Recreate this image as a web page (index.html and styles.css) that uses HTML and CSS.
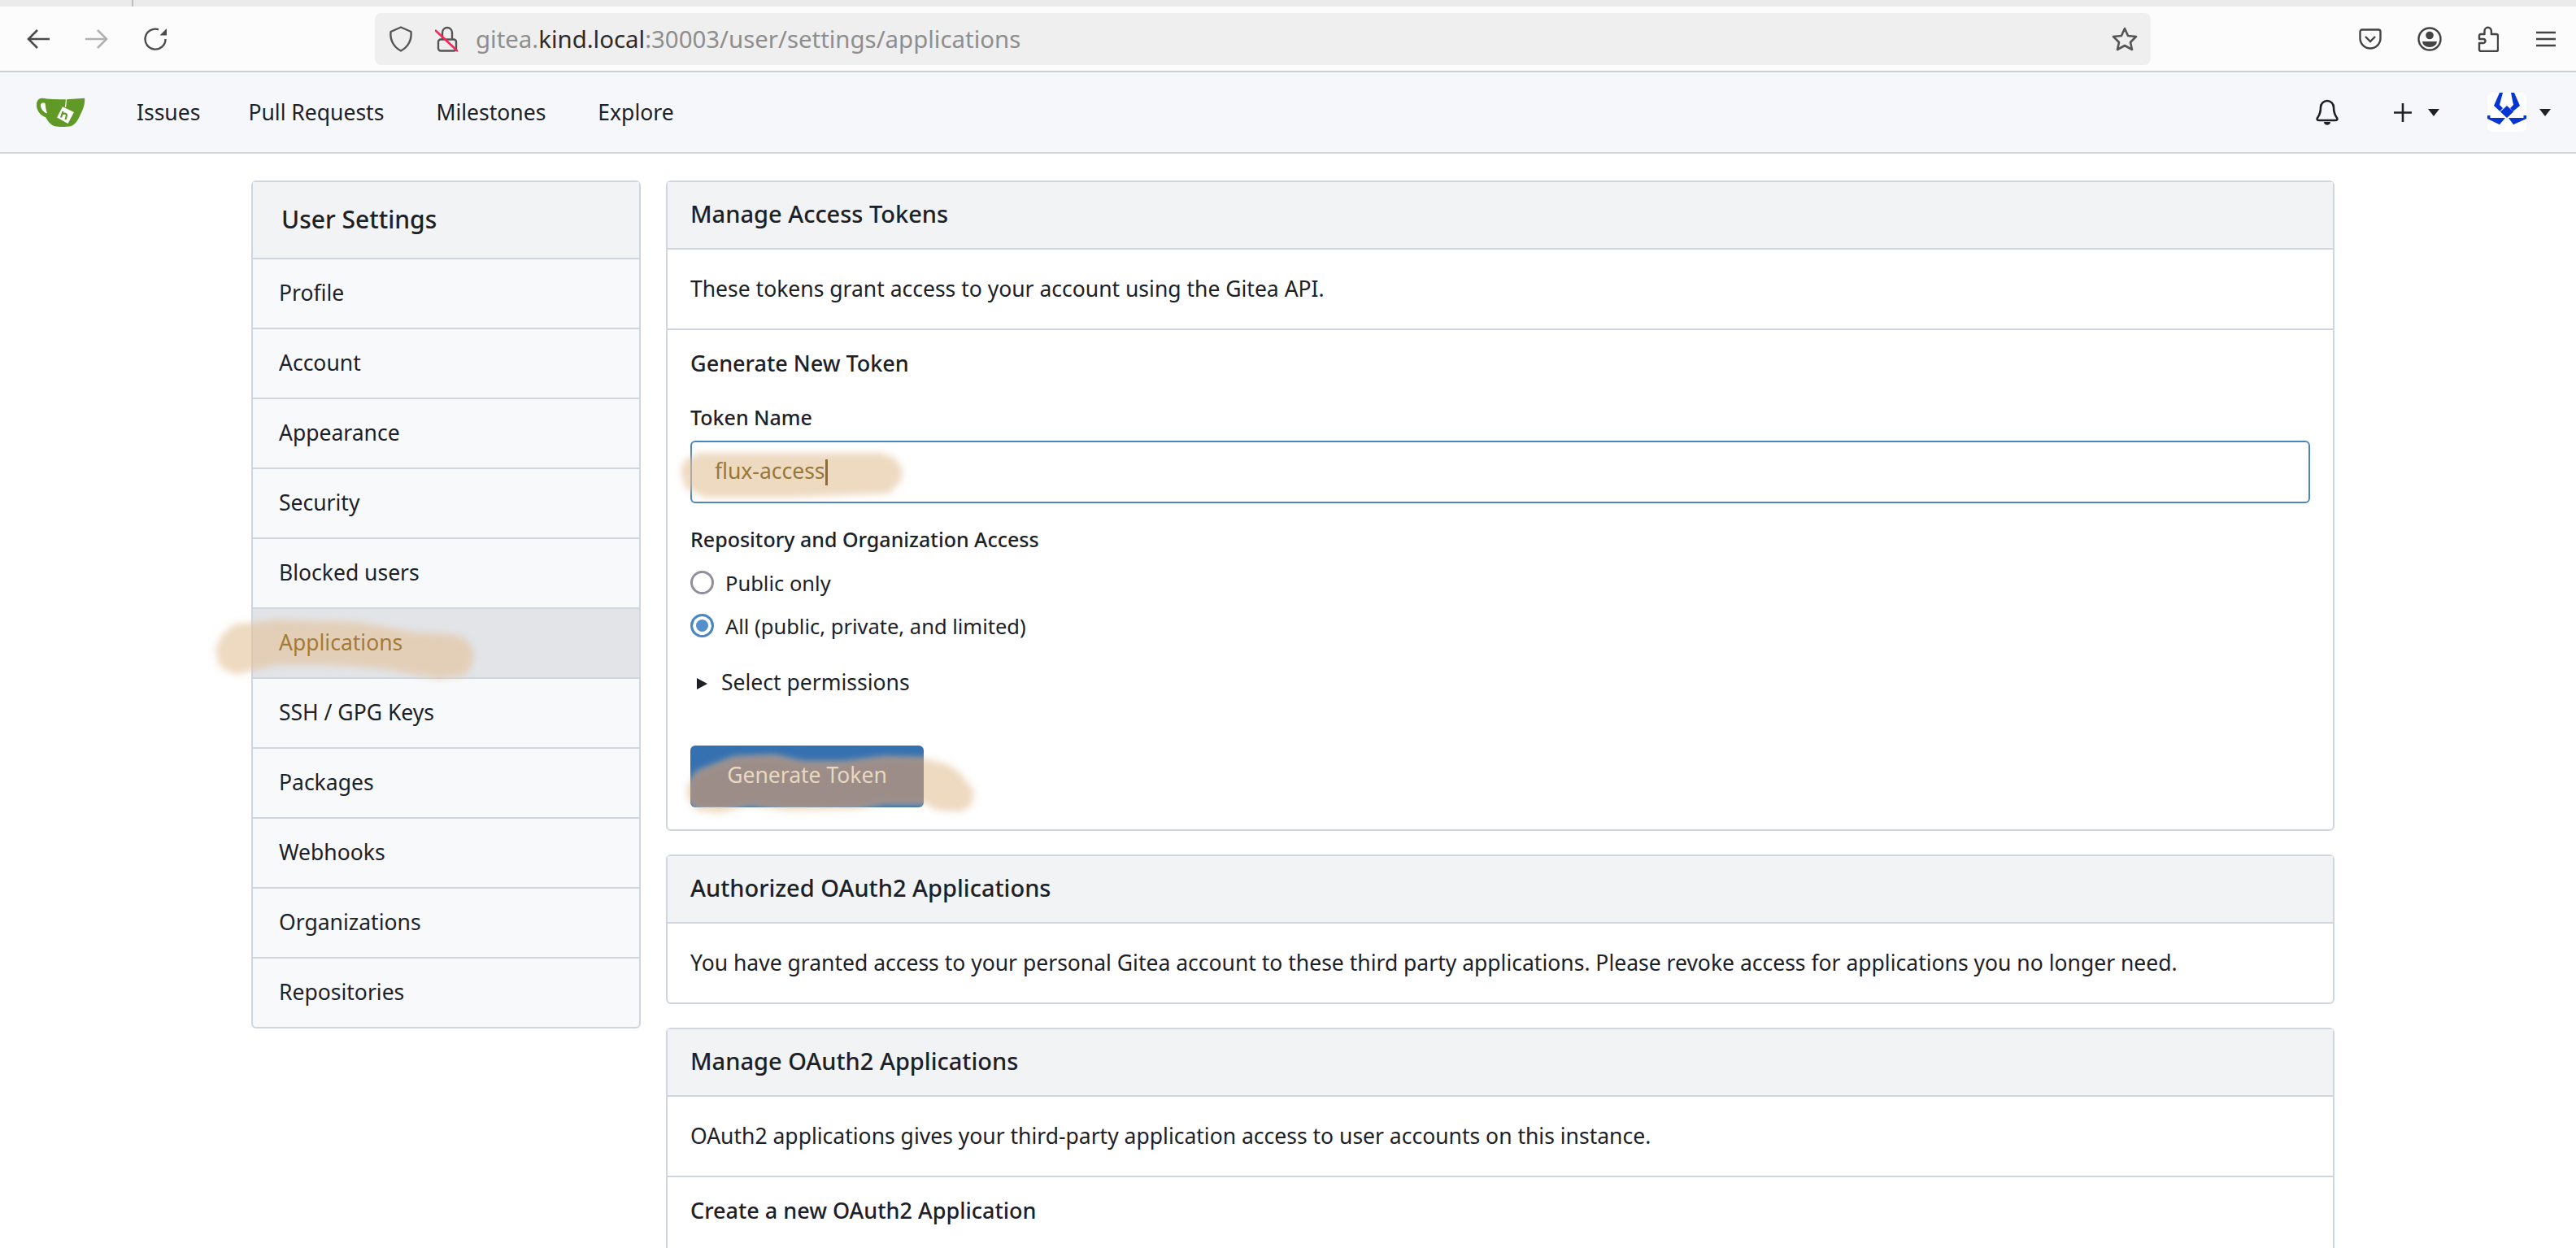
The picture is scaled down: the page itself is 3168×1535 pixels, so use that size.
FILE: index.html
```html
<!DOCTYPE html>
<html lang="en">
<head>
    <meta charset="UTF-8">
    <meta name="viewport" content="width=device-width, initial-scale=1.0">
    <title>Applications - Gitea</title>
    <link rel="stylesheet" href="styles.css">
</head>
<body>
    <div class="tabstrip"><span class="tabstrip-tick"></span></div>

    <!-- browser toolbar -->
    <div class="toolbar">
        <svg class="icon icon-back" viewBox="0 0 28 24"><path d="M13 1 2 12l11 11M2 12h26" fill="none" stroke="#4a4a4a" stroke-width="2.6"/></svg>
        <svg class="icon icon-forward" viewBox="0 0 28 24"><path d="M15 1l11 11-11 11M26 12H0" fill="none" stroke="#b0b0b0" stroke-width="2.6"/></svg>
        <svg class="icon icon-reload" viewBox="0 0 28 28"><path d="M18 2.3A12.5 12.5 0 1 0 26.5 14" fill="none" stroke="#4a4a4a" stroke-width="2.4"/><path d="M28 1v8.5H19.5z" fill="#4a4a4a"/></svg>
        <div class="urlbar">
            <svg class="icon icon-shield" viewBox="0 0 30 32"><path d="M15 1.5 27.5 7c1 10-3.5 19-12.5 23.5C6 26 1.5 17 2.5 7z" fill="none" stroke="#555" stroke-width="2.4" stroke-linejoin="round"/></svg>
            <svg class="icon icon-lock" viewBox="0 0 28 32"><path d="M9 16V8a6 6 0 0 1 12 0v8" fill="none" stroke="#555" stroke-width="2.4"/><rect x="4" y="16.5" width="22" height="14" rx="3" fill="none" stroke="#555" stroke-width="2.4"/><path d="M0 5l28 26" stroke="#ff2257" stroke-width="2.6"/></svg>
            <div class="url"><span class="url-dim">gitea.</span>kind.local<span class="url-dim">:30003/user/settings/applications</span></div>
            <svg class="icon icon-star" viewBox="0 0 32 30"><path d="M16 2l4 9 10 1-7 7 2 9-9-5-9 5 2-9-7-7 10-1z" fill="none" stroke="#555" stroke-width="2.6" stroke-linejoin="round"/></svg>
        </div>
        <div class="toolbar-right">
            <svg class="icon icon-pocket" viewBox="0 0 28 26"><path d="M4 1.5h20A2.5 2.5 0 0 1 26.5 4v8a12.5 12.5 0 0 1-25 0V4A2.5 2.5 0 0 1 4 1.5z" fill="none" stroke="#444" stroke-width="2.4"/><path d="M8 10l6 6 6-6" fill="none" stroke="#444" stroke-width="2.4"/></svg>
            <svg class="icon icon-account" viewBox="0 0 30 30"><circle cx="15" cy="15" r="13.5" fill="none" stroke="#444" stroke-width="2.4"/><circle cx="15" cy="10.5" r="4.8" fill="#444"/><path d="M6 18h18a9 7 0 0 1-18 0z" fill="#444"/></svg>
            <svg class="icon icon-puzzle" viewBox="0 0 26 32"><path d="M2 21h5a2.5 2.5 0 0 0 0-5H2v-4a2 2 0 0 1 2-2h4.5V6a4.2 4.2 0 0 1 8.4 0v4H23a2 2 0 0 1 2 2v17a2 2 0 0 1-2 2H4a2 2 0 0 1-2-2z" fill="none" stroke="#444" stroke-width="2.4" stroke-linejoin="round"/></svg>
            <svg class="icon icon-menu" viewBox="0 0 24 20"><path d="M0 2h24M0 10h24M0 18h24" stroke="#444" stroke-width="2.4"/></svg>
        </div>
    </div>

    <!-- gitea navbar -->
    <nav class="navbar">
        <svg class="logo" viewBox="0 0 60 38">
            <path d="M5 2c2-.5 5-.5 7 .5C28 4 44 3 59 1.7c1 7-2 14-5 20-3 7-6 12-12 14.5-6 1-14 1-20 0-5-2-8-6-11-11C5 23 1 18 0 12-.5 7 1 3 5 2z" fill="#609926"/>
            <path d="M7 7.5c-2 .5-2.5 3-1.5 6 1 3 4 6 7.5 7-1.500-4-2-8-2.500-12.500-1-.5-2.500-.5-3.500-.5z" fill="#fff"/>
            <path d="M36.7 1.7 35.5 13" stroke="#fff" stroke-width="1.2"/>
            <path d="M32 12.3 46 19l-7.5 14L25 25.500z" fill="#fff"/>
            <path d="M32.5 18l-2.5 7.5M32 21c3-1 5 0 5 2l-1.5 5" fill="none" stroke="#609926" stroke-width="2.2"/>
        </svg>
        <a class="nav-link nav-issues">Issues</a>
        <a class="nav-link nav-pulls">Pull Requests</a>
        <a class="nav-link nav-miles">Milestones</a>
        <a class="nav-link">Explore</a>
        <div class="nav-right">
            <svg class="nav-bell" viewBox="0 0 28 32"><path d="M14 2a8 8 0 0 0-8 8c0 8-2 10-4 13-1 2 0 3 2 3h20c2 0 3-1 2-3-2-3-4-5-4-13a8 8 0 0 0-8-8z" fill="none" stroke="#1c2128" stroke-width="2.6"/><path d="M10 28h8c0 5-8 5-8 0z" fill="#1c2128"/></svg>
            <svg class="nav-plus" viewBox="0 0 22 23"><path d="M11 0v23M0 11.5h22" stroke="#1c2128" stroke-width="2.6" stroke-linecap="round"/></svg>
            <span class="caret"></span>
            <svg class="avatar" viewBox="0 0 48 48">
                <rect width="48" height="48" rx="6" fill="#fff"/>
                <path d="M15 0h4l-4 15 4 4-3.5 4L8 16zM33 0h-4l3 15-4 4 3.5 4L40 16zM24 16l8 7.5-8 7.5-8-7.5z" fill="#0535d2"/>
                <path d="M0 28h3.5v3H22l-7 8.3L0 32zM48 28h-3.5v3H26l6 8.3L48 32z" fill="#0535d2"/>
            </svg>
            <span class="caret"></span>
        </div>
    </nav>

    <div class="page">
        <aside class="sidebar">
            <div class="sidebar-title">User Settings</div>
            <a class="side-item">Profile</a>
            <a class="side-item">Account</a>
            <a class="side-item">Appearance</a>
            <a class="side-item">Security</a>
            <a class="side-item">Blocked users</a>
            <a class="side-item active"><span class="marked">Applications</span></a>
            <a class="side-item">SSH / GPG Keys</a>
            <a class="side-item">Packages</a>
            <a class="side-item">Webhooks</a>
            <a class="side-item">Organizations</a>
            <a class="side-item">Repositories</a>
        </aside>

        <main class="content">
            <section class="card">
                <h4 class="card-head">Manage Access Tokens</h4>
                <div class="card-row">These tokens grant access to your account using the Gitea API.</div>
                <form class="card-form">
                    <h5 class="form-title">Generate New Token</h5>
                    <label class="field-label">Token Name</label>
                    <div class="text-input"><span class="marked input-val">flux-access</span><span class="marked input-cursor"></span></div>
                    <label class="field-label label-repo">Repository and Organization Access</label>
                    <div class="radio-row"><span class="radio"></span>Public only</div>
                    <div class="radio-row"><span class="radio checked"></span>All (public, private, and limited)</div>
                    <div class="perm-row"><span class="perm-arrow"></span><span class="perm-text">Select permissions</span></div>
                    <button class="btn-primary" type="button"><span class="marked">Generate Token</span></button>
                </form>
            </section>

            <section class="card">
                <h4 class="card-head">Authorized OAuth2 Applications</h4>
                <div class="card-row">You have granted access to your personal Gitea account to these third party applications. Please revoke access for applications you no longer need.</div>
            </section>

            <section class="card">
                <h4 class="card-head">Manage OAuth2 Applications</h4>
                <div class="card-row">OAuth2 applications gives your third-party application access to user accounts on this instance.</div>
                <div class="card-form form-open">
                    <h5 class="form-title">Create a new OAuth2 Application</h5>
                </div>
            </section>
        </main>
    </div>

    <!-- marker scribbles on top of the screenshot -->
    <svg class="scribbles" viewBox="0 0 3168 1535">
        <defs>
            <filter id="soft"><feGaussianBlur stdDeviation="4"/></filter>
            <clipPath id="btn-clip"><rect x="849" y="916" width="287" height="76" rx="6"/></clipPath>
        </defs>
        <g filter="url(#soft)">
            <polygon class="scribble" points="837,580 842,566 860,557 967,557 1083,557 1100,563 1110,577 1108,592 1093,607 967,612 867,612 843,600"/>
            <polygon class="scribble" points="265,800 272,782 287,768 340,762 440,765 507,777 557,780 575,787 583,803 580,820 573,830 540,835 473,823 407,818 340,818 290,830 270,820"/>
            <polygon class="scribble" points="845,967 857,950 903,932 953,930 987,938 1037,938 1087,932 1137,933 1165,940 1180,950 1198,973 1195,990 1183,998 1153,997 1137,988 1087,988 1053,995 970,997 920,990 887,1000 857,997 845,980"/>
        </g>
        <g clip-path="url(#btn-clip)">
            <polygon class="scribble-btn" filter="url(#soft)" points="845,967 857,950 903,932 953,930 987,938 1037,938 1087,932 1137,933 1165,940 1180,950 1198,973 1195,990 1183,998 1153,997 1137,988 1087,988 1053,995 970,997 920,990 887,1000 857,997 845,980"/>
        </g>
    </svg>
</body>
</html>
```

FILE: styles.css
```css
* {
    box-sizing: border-box;
}
html, body {
    height: 100%;
}
body {
    margin: 0;
    overflow: hidden;
    background: #fff;
    color: #1c2128;
    font-family: "Noto Sans", sans-serif;
    font-size: 26.5px;
    position: relative;
}
.icon {
    flex: none;
    display: block;
}

/* browser chrome */
.tabstrip {
    height: 8px;
    background: #ebebeb;
    padding-left: 162px;
}
.tabstrip-tick {
    display: block;
    width: 2px;
    height: 8px;
    background: #bdbdbd;
}
.toolbar {
    height: 81px;
    background: #fcfcfc;
    border-bottom: 2px solid #cfcfcf;
    display: flex;
    align-items: center;
    padding-left: 33px;
}
.icon-back {
    width: 28px;
    height: 24px;
}
.icon-forward {
    width: 28px;
    height: 24px;
    margin-left: 44px;
}
.icon-reload {
    width: 28px;
    height: 28px;
    margin-left: 44px;
}
.urlbar {
    width: 2184px;
    height: 64px;
    margin-left: 256px;
    background: #efefef;
    border-radius: 8px;
    display: flex;
    align-items: center;
    padding: 0 16px 0 17px;
}
.icon-shield {
    width: 30px;
    height: 32px;
}
.icon-lock {
    width: 28px;
    height: 32px;
    margin-left: 27px;
}
.url {
    margin-left: 22px;
    flex: 1;
    font-size: 29.4px;
    color: #2b2b2b;
}
.url-dim {
    color: #8e8e8e;
}
.icon-star {
    width: 32px;
    height: 30px;
}
.toolbar-right {
    display: flex;
    align-items: center;
    margin-left: 256px;
}
.icon-pocket {
    width: 28px;
    height: 26px;
}
.icon-account {
    width: 30px;
    height: 30px;
    margin-left: 44px;
}
.icon-puzzle {
    width: 26px;
    height: 32px;
    margin-left: 44px;
}
.icon-menu {
    width: 24px;
    height: 20px;
    margin-left: 46px;
}

/* site navbar */
.navbar {
    height: 100px;
    background: #f6f7fb;
    border-bottom: 2px solid #cfd6e0;
    display: flex;
    align-items: center;
    padding-left: 45px;
}
.logo {
    width: 60px;
    height: 38px;
    margin-right: 63px;
}
.nav-link {
    color: #1c2128;
    padding-bottom: 1px;
}
.nav-issues {
    margin-right: 59px;
}
.nav-pulls {
    margin-right: 64px;
}
.nav-miles {
    margin-right: 64px;
}
.nav-right {
    margin-left: auto;
    display: flex;
    align-items: center;
    padding-right: 31px;
}
.nav-bell {
    width: 28px;
    height: 32px;
}
.nav-plus {
    width: 22px;
    height: 23px;
    margin-left: 68px;
}
.caret {
    width: 0;
    height: 0;
    border-left: 7.5px solid transparent;
    border-right: 7.5px solid transparent;
    border-top: 9px solid #1c2128;
    margin-left: 20px;
}
.avatar {
    width: 48px;
    height: 48px;
    margin-left: 59px;
}
.avatar + .caret {
    margin-left: 16px;
}

/* page columns */
.page {
    display: flex;
    align-items: flex-start;
    gap: 31px;
    padding: 33px 0 0 309px;
}
.sidebar {
    width: 479px;
    flex: none;
    border: 2px solid #cfd6e0;
    border-radius: 6px;
    background: #f8f9fb;
}
.sidebar-title {
    height: 93px;
    background: #f1f3f5;
    display: flex;
    align-items: center;
    padding: 0 0 2px 35px;
    font-size: 30px;
    font-weight: 500;
}
.side-item {
    display: flex;
    align-items: center;
    height: 86px;
    padding: 0 0 3px 32px;
    border-top: 2px solid #cfd6e0;
}
.side-item.active {
    background: #e2e4e8;
}
.content {
    width: 2052px;
    flex: none;
    display: flex;
    flex-direction: column;
    gap: 29px;
}
.card {
    border: 2px solid #cfd6e0;
    border-radius: 6px;
    background: #fff;
}
.card-head {
    margin: 0;
    height: 83px;
    display: flex;
    align-items: center;
    padding: 0 0 4px 28px;
    background: #f1f3f5;
    border-bottom: 2px solid #cfd6e0;
    font-size: 29px;
    font-weight: 500;
}
.card-row {
    height: 97px;
    display: flex;
    align-items: center;
    padding: 0 0 2px 28px;
}
.card-form {
    border-top: 2px solid #cfd6e0;
    padding: 23px 28px 27px;
}
.form-open {
    padding-bottom: 80px;
}
.form-title {
    margin: 0;
    font-size: 27px;
    font-weight: 500;
    line-height: 36px;
}
.field-label {
    display: block;
    margin-top: 30px;
    font-size: 25px;
    font-weight: 500;
    line-height: 36px;
}
.text-input {
    margin-top: 11px;
    height: 77px;
    border: 2px solid #4b85c2;
    border-radius: 6px;
    display: flex;
    align-items: center;
    padding: 0 0 4px 28px;
    color: #97783a;
}
.input-cursor {
    width: 3px;
    height: 32px;
    margin-top: 4px;
    background: #8f6e2c;
}
.label-repo {
    margin-top: 26px;
}
.radio-row {
    display: flex;
    align-items: center;
    gap: 14px;
    height: 53px;
    font-size: 25.5px;
}
.label-repo + .radio-row {
    margin-top: 9px;
}
.radio {
    width: 29px;
    height: 29px;
    border-radius: 50%;
    border: 3px solid #8f8f9d;
    background: #fff;
}
.radio.checked {
    border-color: #4b85c2;
    box-shadow: inset 0 0 0 4px #fff;
    background: #5590cc;
}
.perm-row {
    display: flex;
    align-items: center;
    height: 48px;
    margin-top: 21px;
}
.perm-arrow {
    width: 0;
    height: 0;
    border-top: 7px solid transparent;
    border-bottom: 7px solid transparent;
    border-left: 13px solid #1c2128;
    margin: 0 17px 0 8px;
}
.perm-text {
    padding-bottom: 4px;
}
.btn-primary {
    display: block;
    width: 287px;
    height: 76px;
    margin-top: 52px;
    padding: 0 0 4px;
    border: none;
    border-radius: 6px;
    background: #3571b1;
    color: #e8d8c0;
    font-family: inherit;
    font-size: 26.5px;
}

/* scribbles sit over the page; marked text is lifted back above them */
.scribbles {
    position: absolute;
    left: 0;
    top: 0;
    width: 3168px;
    height: 1535px;
    z-index: 1;
    pointer-events: none;
}
.scribble {
    fill: #e3c49b;
    fill-opacity: 0.62;
}
.scribble-btn {
    fill: #9d8d88;
}
.marked {
    position: relative;
    z-index: 2;
}
.side-item .marked {
    color: #a37b35;
}
```
